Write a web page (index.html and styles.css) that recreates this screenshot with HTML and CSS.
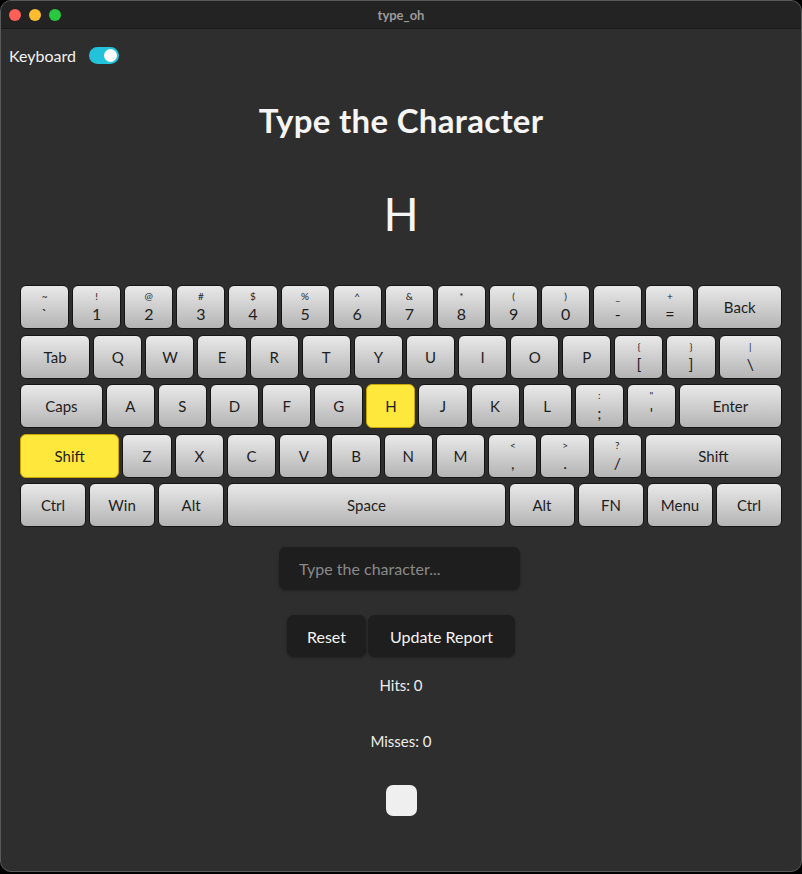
FILE: index.html
```html
<!DOCTYPE html>
<html>
<head>
<meta charset="utf-8">
<title>type_oh</title>
<link rel="stylesheet" href="styles.css">
</head>
<body>
<div class="window">
  <div class="titlebar">
    <div class="lights">
      <span class="light red"></span>
      <span class="light yellow"></span>
      <span class="light green"></span>
    </div>
    <div class="wtitle">type_oh</div>
  </div>
  <div class="content">
    <div class="toggle-row">
      <span class="toggle-label">Keyboard</span>
      <span class="switch"><span class="knob"></span></span>
    </div>
    <h1 class="title">Type the Character</h1>
    <div class="target">H</div>

    <div class="keyboard">
      <div class="row">
        <div class="key k49 dual"><span class="top">~</span><span class="bot">`</span></div>
        <div class="key k49 dual"><span class="top">!</span><span class="bot">1</span></div>
        <div class="key k49 dual"><span class="top">@</span><span class="bot">2</span></div>
        <div class="key k49 dual"><span class="top">#</span><span class="bot">3</span></div>
        <div class="key k49 dual"><span class="top">$</span><span class="bot">4</span></div>
        <div class="key k49 dual"><span class="top">%</span><span class="bot">5</span></div>
        <div class="key k49 dual"><span class="top">^</span><span class="bot">6</span></div>
        <div class="key k49 dual"><span class="top">&amp;</span><span class="bot">7</span></div>
        <div class="key k49 dual"><span class="top">*</span><span class="bot">8</span></div>
        <div class="key k49 dual"><span class="top">(</span><span class="bot">9</span></div>
        <div class="key k49 dual"><span class="top">)</span><span class="bot">0</span></div>
        <div class="key k49 dual"><span class="top">_</span><span class="bot">-</span></div>
        <div class="key k49 dual"><span class="top">+</span><span class="bot">=</span></div>
        <div class="key k-back">Back</div>
      </div>
      <div class="row">
        <div class="key k-tab">Tab</div>
        <div class="key k49">Q</div>
        <div class="key k49">W</div>
        <div class="key k49">E</div>
        <div class="key k49">R</div>
        <div class="key k49">T</div>
        <div class="key k49">Y</div>
        <div class="key k49">U</div>
        <div class="key k49">I</div>
        <div class="key k49">O</div>
        <div class="key k49">P</div>
        <div class="key k49 dual"><span class="top">{</span><span class="bot">[</span></div>
        <div class="key k49 dual"><span class="top">}</span><span class="bot">]</span></div>
        <div class="key k-bslash dual"><span class="top">|</span><span class="bot">\</span></div>
      </div>
      <div class="row">
        <div class="key k-caps">Caps</div>
        <div class="key k49">A</div>
        <div class="key k49">S</div>
        <div class="key k49">D</div>
        <div class="key k49">F</div>
        <div class="key k49">G</div>
        <div class="key k49 lit">H</div>
        <div class="key k49">J</div>
        <div class="key k49">K</div>
        <div class="key k49">L</div>
        <div class="key k49 dual"><span class="top">:</span><span class="bot">;</span></div>
        <div class="key k49 dual"><span class="top">"</span><span class="bot">'</span></div>
        <div class="key k-enter">Enter</div>
      </div>
      <div class="row">
        <div class="key k-lshift lit">Shift</div>
        <div class="key k49">Z</div>
        <div class="key k49">X</div>
        <div class="key k49">C</div>
        <div class="key k49">V</div>
        <div class="key k49">B</div>
        <div class="key k49">N</div>
        <div class="key k49">M</div>
        <div class="key k49 dual"><span class="top">&lt;</span><span class="bot">,</span></div>
        <div class="key k49 dual"><span class="top">&gt;</span><span class="bot">.</span></div>
        <div class="key k49 dual"><span class="top">?</span><span class="bot">/</span></div>
        <div class="key k-rshift">Shift</div>
      </div>
      <div class="row">
        <div class="key k-mod">Ctrl</div>
        <div class="key k-mod">Win</div>
        <div class="key k-mod">Alt</div>
        <div class="key k-space">Space</div>
        <div class="key k-mod">Alt</div>
        <div class="key k-mod">FN</div>
        <div class="key k-mod">Menu</div>
        <div class="key k-mod">Ctrl</div>
      </div>
    </div>

    <div class="input-wrap">
      <input class="char-input" type="text" placeholder="Type the character..." autofocus>
    </div>

    <div class="buttons">
      <button class="btn btn-reset">Reset</button>
      <button class="btn btn-update">Update Report</button>
    </div>

    <div class="stat hits">Hits: 0</div>
    <div class="stat misses">Misses: 0</div>
    <div class="square"></div>
  </div>
</div>
</body>
</html>
```

FILE: styles.css
```css
html, body {
  margin: 0;
  padding: 0;
  background: #000;
}

body {
  width: 802px;
  height: 874px;
  font-family: "Lato", "Open Sans", sans-serif;
}

.window {
  box-sizing: border-box;
  width: 802px;
  height: 872px;
  border: 1px solid #5a5a5a;
  border-radius: 11px;
  background: #2e2e2e;
  overflow: hidden;
  display: flex;
  flex-direction: column;
}

.titlebar {
  height: 27px;
  flex: 0 0 27px;
  background: #232323;
  border-bottom: 1px solid #1a1a1a;
  display: flex;
  align-items: center;
  position: relative;
}

.lights {
  display: flex;
  gap: 8px;
  padding-left: 8px;
}

.light {
  width: 12px;
  height: 12px;
  border-radius: 50%;
  display: block;
}
.red { background: #fe5f57; }
.yellow { background: #febc2e; }
.green { background: #28c840; }

.wtitle {
  position: absolute;
  left: 0;
  right: 0;
  text-align: center;
  color: #9a9a9a;
  font-weight: 700;
  font-size: 13px;
  top: 6px;
}

.content {
  flex: 1;
  display: flex;
  flex-direction: column;
  align-items: center;
}

.toggle-row {
  align-self: flex-start;
  display: flex;
  align-items: center;
  gap: 13px;
  margin: 16px 0 0 8px;
  height: 20px;
}

.toggle-label {
  color: #f2f2f2;
  font-size: 16px;
}

.switch {
  width: 30px;
  height: 17px;
  border-radius: 9px;
  background: #22c3da;
  position: relative;
  display: block;
}

.knob {
  position: absolute;
  right: 2px;
  top: 2px;
  width: 13px;
  height: 13px;
  border-radius: 50%;
  background: #fff;
}

.title {
  margin: 35px 0 0;
  font-size: 33px;
  font-weight: 700;
  color: #f5f5f5;
  line-height: 40px;
  letter-spacing: 0.3px;
}

.target {
  margin-top: 50px;
  font-size: 46px;
  color: #f5f5f5;
  line-height: 48px;
  font-weight: 400;
}

.keyboard {
  margin-top: 47px;
  width: 762px;
  display: flex;
  flex-direction: column;
  gap: 5.5px;
}

.row {
  display: flex;
  gap: 3px;
  height: 44px;
}

.key {
  box-sizing: border-box;
  flex-basis: 0;
  border: 1px solid #151515;
  border-radius: 6px;
  background: linear-gradient(#e9e9e9, #b4b4b4);
  color: #1e1e1e;
  font-size: 15px;
  display: flex;
  align-items: center;
  justify-content: center;
  flex-direction: column;
}

.key.dual {
  justify-content: center;
  gap: 3px;
}

.dual .top {
  font-size: 10px;
  line-height: 11px;
}

.dual .bot {
  font-size: 16px;
  line-height: 18px;
}

.key.lit {
  background: #ffe83c;
  border-color: #c9a500;
}

.k49 { flex-grow: 49; }
.k-back { flex-grow: 86; }
.k-tab { flex-grow: 71; }
.k-bslash { flex-grow: 64; }
.k-caps { flex-grow: 84; }
.k-enter { flex-grow: 105; }
.k-lshift { flex-grow: 101; }
.k-rshift { flex-grow: 140; }
.k-mod { flex-grow: 65; }
.k-space { flex-grow: 281; }

.input-wrap {
  margin-top: 20px;
  margin-right: 3px;
}

.char-input {
  box-sizing: border-box;
  width: 241px;
  height: 43px;
  border: none;
  border-radius: 7px;
  background: #1e1e1e;
  color: #f0f0f0;
  font-family: inherit;
  font-size: 16px;
  padding: 0 0 0 20px;
  outline: none;
  box-shadow: 0 1px 3px rgba(0,0,0,0.3);
}

.char-input::placeholder {
  color: #8a8a8a;
}

.buttons {
  margin-top: 25px;
  display: flex;
  gap: 2px;
}

.btn {
  height: 42px;
  border: none;
  border-radius: 7px;
  background: #1e1e1e;
  color: #f5f5f5;
  font-family: inherit;
  font-size: 16px;
  padding: 0;
  box-shadow: 0 1px 3px rgba(0,0,0,0.3);
}

.btn-reset { width: 79px; }
.btn-update { width: 147px; }

.stat {
  color: #ededed;
  font-size: 15px;
  line-height: 20px;
}

.hits { margin-top: 18px; }
.misses { margin-top: 36px; }

.square {
  margin-top: 34px;
  width: 31px;
  height: 31px;
  border-radius: 7px;
  background: #efefef;
}
```
